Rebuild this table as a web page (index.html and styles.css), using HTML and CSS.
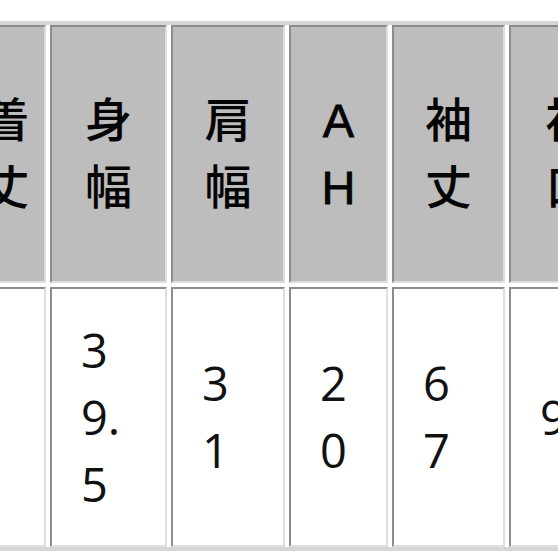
FILE: index.html
```html
<!DOCTYPE html>
<html lang="ja">
<head>
<meta charset="utf-8">
<title>サイズ表</title>
<link rel="stylesheet" href="styles.css">
</head>
<body>
<div class="sheet">
  <div class="grid">
    <div class="cell head"><span class="label">着丈</span></div>
    <div class="cell head"><span class="label">身幅</span></div>
    <div class="cell head"><span class="label">肩幅</span></div>
    <div class="cell head"><span class="label latin">AH</span></div>
    <div class="cell head"><span class="label">袖丈</span></div>
    <div class="cell head"><span class="label">袖口</span></div>

    <div class="cell data"><span class="value"></span></div>
    <div class="cell data"><span class="value">39.5</span></div>
    <div class="cell data"><span class="value">31</span></div>
    <div class="cell data"><span class="value">20</span></div>
    <div class="cell data"><span class="value">67</span></div>
    <div class="cell data"><span class="value">9</span></div>
  </div>
</div>
</body>
</html>
```

FILE: styles.css
```css
html, body {
  margin: 0;
  padding: 0;
  overflow: hidden;
  background: #ffffff;
}

.sheet {
  padding-top: 21px;
  margin-left: -34px;
  width: 700px;
}

.grid {
  display: grid;
  grid-template-columns: 80px 117px 114px 99px 113px 120px;
  grid-template-rows: 258px 260px;
  column-gap: 4px;
  row-gap: 4px;
  border-top: 4px solid #d6d6d6;
  border-bottom: 4px solid #d6d6d6;
  width: max-content;
}

.cell {
  box-sizing: border-box;
  display: flex;
  align-items: center;
  border-style: solid;
  border-width: 2px;
  border-color: #8c8c8c #dedede #dedede #8c8c8c;
  color: #111111;
  font-size: 47px;
  line-height: 67px;
}

.head {
  background: #bdbdbd;
  justify-content: center;
  color: #050505;
  font-weight: 500;
  font-family: "Liberation Sans", "Noto Sans CJK JP", sans-serif;
}

.label {
  width: 1em;
  text-align: center;
  word-break: break-all;
}

.latin {
  -webkit-text-stroke: 0.8px #050505;
}

.data {
  background: #ffffff;
  justify-content: flex-start;
  padding-left: 29px;
  font-family: "Open Sans", "Noto Sans", sans-serif;
}

.value {
  width: 46px;
  word-break: break-all;
}
```
